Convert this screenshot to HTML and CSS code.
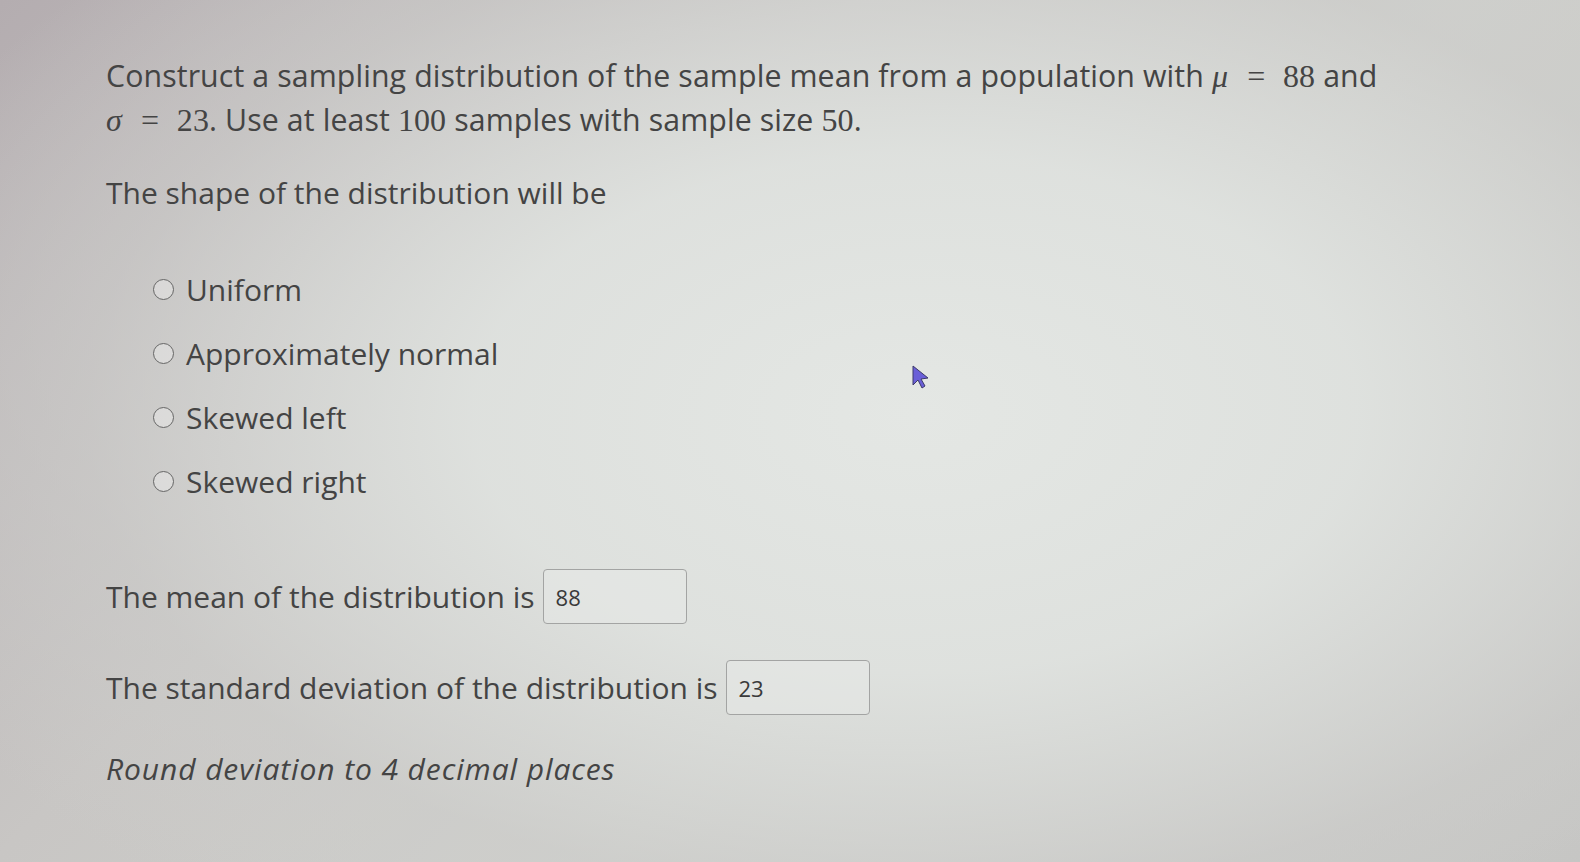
FILE: index.html
```html
<!DOCTYPE html>
<html lang="en">
<head>
<meta charset="utf-8">
<title>Sampling distribution</title>
<link rel="stylesheet" href="styles.css">
</head>
<body>
<main class="question">
  <p class="prompt">Construct a sampling distribution of the sample mean from a population with <span class="math"><i>μ</i><span class="op">=</span>88</span> and <span class="math"><i>σ</i><span class="op">=</span>23</span>. Use at least <span class="math">100</span> samples with sample size <span class="math">50</span>.</p>

  <p class="shape">The shape of the distribution will be</p>

  <ul class="options">
    <li class="option"><span class="radio"></span><span>Uniform</span></li>
    <li class="option"><span class="radio"></span><span>Approximately normal</span></li>
    <li class="option"><span class="radio"></span><span>Skewed left</span></li>
    <li class="option"><span class="radio"></span><span>Skewed right</span></li>
  </ul>

  <p class="answer answer-mean">The mean of the distribution is <span class="field">88</span></p>
  <p class="answer answer-sd">The standard deviation of the distribution is <span class="field">23</span></p>

  <p class="note">Round deviation to 4 decimal places</p>
</main>
<svg class="cursor" width="22" height="26" viewBox="0 0 22 26"><path d="M3 2 L3 21 L8 16 L12 24 L15 22 L11 15 L18 14 Z" fill="#6a5fd8" stroke="#3d3a6a" stroke-width="1"/></svg>
</body>
</html>
```
FILE: styles.css
```css
html, body {
  margin: 0;
  height: 100%;
}
body {
  width: 1580px;
  height: 862px;
  overflow: hidden;
  position: relative;
  font-family: "Open Sans", "Lato", sans-serif;
  color: #444;
  background:
    radial-gradient(ellipse 70% 75% at 58% 48%, rgba(228,231,228,1) 0%, rgba(224,227,224,0.9) 40%, rgba(205,205,203,0.6) 75%, rgba(190,190,188,0) 100%),
    linear-gradient(135deg, #b4adb0 0%, #c8c6c4 35%, #cfd0cc 60%, #c4c4c2 100%);
}
.question {
  padding: 54px 0 0 106px;
  width: 1340px;
  font-size: 30px;
}
p { margin: 0; }
.prompt {
  line-height: 44px;
  font-size: 30.3px;
  letter-spacing: 0.1px;
}
.math {
  font-family: "Liberation Serif", "DejaVu Serif", serif;
  font-size: 32px;
  line-height: 1;
  white-space: nowrap;
}
.math i { font-style: italic; }
.op { padding: 0 0.55em 0 0.6em; }
.shape {
  margin-top: 29px;
  line-height: 44px;
}
.options {
  list-style: none;
  margin: 52px 0 0 0;
  padding: 0 0 0 47px;
  display: flex;
  flex-direction: column;
  gap: 20px;
}
.option {
  display: flex;
  align-items: center;
  gap: 12px;
  height: 44px;
}
.radio {
  width: 21px;
  height: 21px;
  border: 1.8px solid #666;
  border-radius: 50%;
  box-sizing: border-box;
  background: rgba(255,255,255,0.3);
}
.answer {
  display: flex;
  align-items: center;
  gap: 8px;
}
.answer-mean { margin-top: 66px; }
.answer-sd { margin-top: 36px; }
.field {
  width: 144px;
  height: 55px;
  box-sizing: border-box;
  border: 1.5px solid #a3a4a3;
  border-radius: 4px;
  display: flex;
  align-items: center;
  padding-left: 12px;
  font-size: 22px;
  color: #3a3a3a;
  background: rgba(232,234,232,0.5);
}
.note {
  margin-top: 32px;
  font-style: italic;
  line-height: 44px;
  letter-spacing: 0.9px;
}
.cursor {
  position: absolute;
  left: 910px;
  top: 364px;
}
```
